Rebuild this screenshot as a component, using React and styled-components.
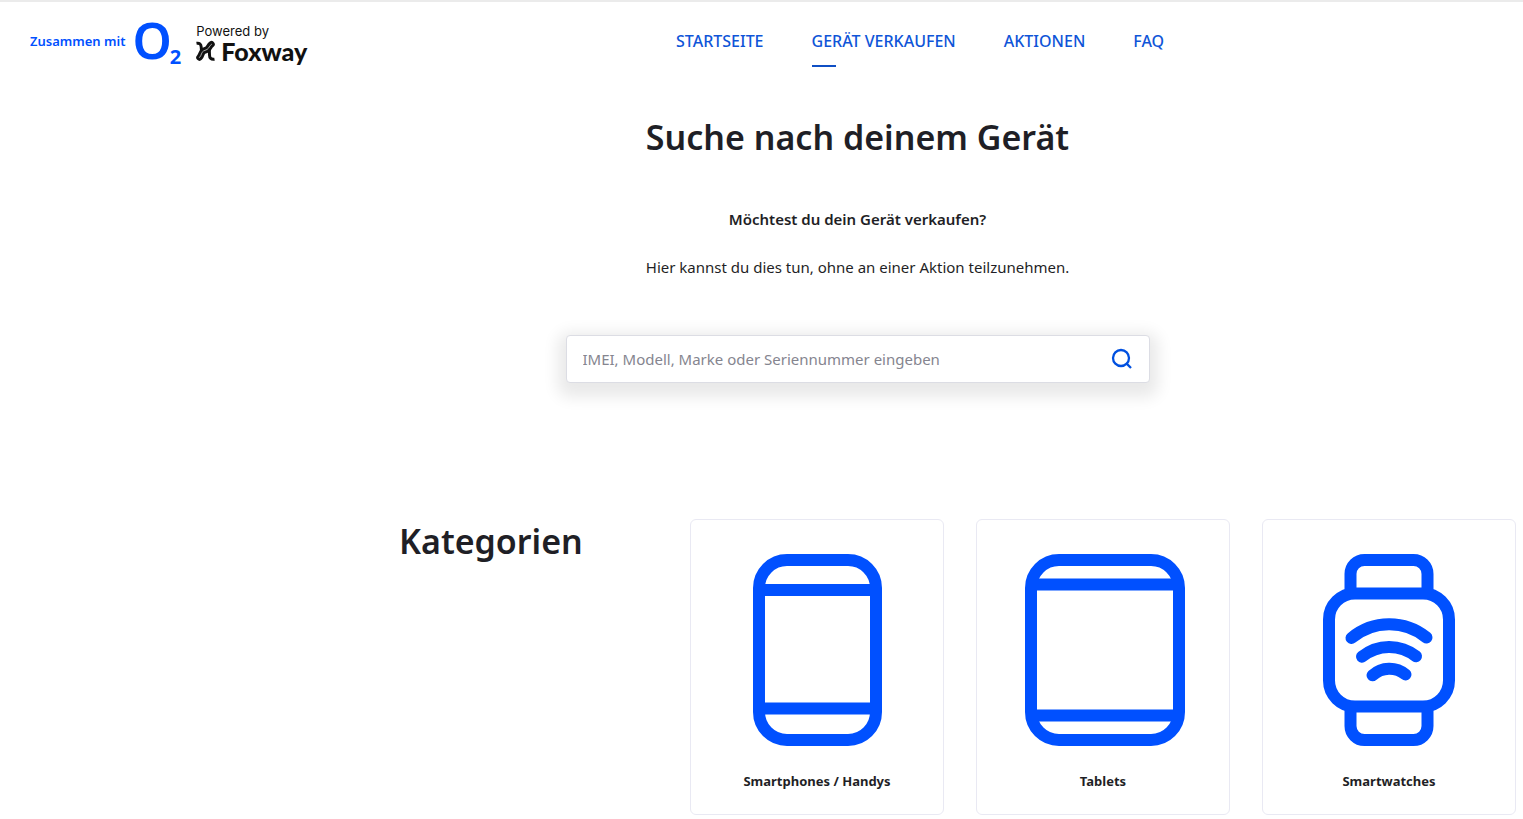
import React, { useState } from "react";
import styled, { createGlobalStyle } from "styled-components";
import { Search } from "lucide-react";

const navItems = [
  { label: "STARTSEITE", href: "#startseite" },
  { label: "GERÄT VERKAUFEN", href: "#verkaufen", active: true },
  { label: "AKTIONEN", href: "#aktionen" },
  { label: "FAQ", href: "#faq" },
];

const categories = [
  { name: "Smartphones / Handys", href: "#smartphones", Icon: PhoneIcon },
  { name: "Tablets", href: "#tablets", Icon: TabletIcon },
  { name: "Smartwatches", href: "#smartwatches", Icon: WatchIcon },
];

function PhoneIcon() {
  return (
    <Drawing viewBox="0 0 192 192" aria-hidden="true">
      <rect x="38" y="6" width="117" height="180" rx="28" />
      <path d="M38 36H155M38 154.5H155" />
    </Drawing>
  );
}

function TabletIcon() {
  return (
    <Drawing viewBox="0 0 192 192" aria-hidden="true">
      <rect x="24" y="6" width="148" height="180" rx="28" />
      <path d="M24 30.5H172M24 161.5H172" />
    </Drawing>
  );
}

function WatchIcon() {
  return (
    <Drawing viewBox="0 0 192 192" aria-hidden="true">
      <rect x="36" y="39.5" width="120" height="113" rx="26" />
      <path d="M57.5 39V20A14 14 0 0 1 71.5 6H120.5A14 14 0 0 1 134.5 20V39" />
      <path d="M57.5 153V172A14 14 0 0 0 71.5 186H120.5A14 14 0 0 0 134.5 172V153" />
      <g strokeLinecap="round">
        <path d="M58.5 84A59 59 0 0 1 133.5 83.5" />
        <path d="M69 102.7A43 43 0 0 1 123 102.3" />
        <path d="M79.5 121.3A25 25 0 0 1 112.5 120.5" />
      </g>
    </Drawing>
  );
}

function FoxwayMark() {
  return (
    <svg width="20" height="22" viewBox="0 0 20 22" fill="none" aria-hidden="true">
      <path
        d="M0.500 3.300C3.500 2.800 5 4 5.200 7L5.500 11M18.500 19.200C15 19.800 13.500 18 13.500 15L13.300 10"
        stroke="#111"
        strokeWidth="3"
      />
      <path
        d="M3.500 17.500C6 15 5 12.500 7.500 11L11 9.500C13.500 8 13 6 15.500 4.300"
        stroke="#111"
        strokeWidth="6.500"
        strokeLinecap="round"
      />
      <path
        d="M3.500 17.500C6 15 5 12.500 7.500 11L11 9.500C13.500 8 13 6 15.500 4.300"
        stroke="#aaa"
        strokeWidth="1"
        strokeLinecap="round"
      />
    </svg>
  );
}

export default function App() {
  const [query, setQuery] = useState("");

  return (
    <>
      <GlobalStyle />
      <Header>
        <Brand href="#startseite">
          <Together>Zusammen mit</Together>
          <Operator>
            <span>O</span>
            <small>2</small>
          </Operator>
          <Partner>
            <PoweredBy>Powered by</PoweredBy>
            <PartnerName>
              <FoxwayMark />
              Foxway
            </PartnerName>
          </Partner>
        </Brand>
        <Nav aria-label="Hauptnavigation">
          {navItems.map((item) => (
            <NavLink
              key={item.label}
              href={item.href}
              $active={item.active}
              aria-current={item.active ? "page" : undefined}
            >
              {item.label}
            </NavLink>
          ))}
        </Nav>
      </Header>

      <main>
        <Hero>
          <Title>Suche nach deinem Gerät</Title>
          <Intro>
            <strong>Möchtest du dein Gerät verkaufen?</strong>
            <p>Hier kannst du dies tun, ohne an einer Aktion teilzunehmen.</p>
          </Intro>
          <SearchForm role="search" onSubmit={(e) => e.preventDefault()}>
            <SearchInput
              type="text"
              aria-label="Gerät suchen"
              placeholder="IMEI, Modell, Marke oder Seriennummer eingeben"
              value={query}
              onChange={(e) => setQuery(e.target.value)}
            />
            <SearchButton type="submit" aria-label="Suchen">
              <Search size={24} strokeWidth={2.3} strokeLinecap="butt" />
            </SearchButton>
          </SearchForm>
        </Hero>

        <Categories>
          <Title as="h2">Kategorien</Title>
          <CardGrid>
            {categories.map(({ name, href, Icon }) => (
              <Card key={name} href={href}>
                <Icon />
                <CardName>{name}</CardName>
              </Card>
            ))}
          </CardGrid>
        </Categories>
      </main>
    </>
  );
}

const GlobalStyle = createGlobalStyle`
  * {
    box-sizing: border-box;
  }

  body {
    margin: 0;
    background: #fff;
    color: #1f1f26;
    font-family: "Noto Sans", "Open Sans", sans-serif;
    font-size: 15px;
    line-height: 24px;
  }
`;

const Header = styled.header`
  display: grid;
  grid-template-columns: 646px 1fr;
  align-items: center;
  min-height: 84px;
  padding: 0 30px;
  border-top: 2px solid #ebebeb;
`;

const Brand = styled.a`
  display: flex;
  align-items: center;
  justify-self: start;
  color: #0050ff;
  text-decoration: none;
`;

const Together = styled.span`
  margin-right: 7px;
  padding-bottom: 4px;
  font-size: 13px;
  font-weight: 600;
`;

const Operator = styled.span`
  display: flex;
  align-items: flex-end;
  margin-right: 15px;

  span {
    padding-bottom: 6px;
    font-size: 50px;
    font-weight: 600;
    line-height: 40px;
  }

  small {
    margin-left: -2px;
    font-size: 20px;
    font-weight: 700;
    line-height: 18px;
  }
`;

const Partner = styled.span`
  display: flex;
  flex-direction: column;
  color: #111;
`;

const PoweredBy = styled.span`
  font-family: Inter, sans-serif;
  font-size: 13px;
  line-height: 16px;
`;

const PartnerName = styled.span`
  display: flex;
  align-items: center;
  gap: 5px;
  font-family: Lato, sans-serif;
  font-size: 25px;
  font-weight: 900;
  line-height: 24px;
`;

const Nav = styled.nav`
  display: flex;
  gap: 48px;
  padding-bottom: 4px;
`;

const NavLink = styled.a`
  position: relative;
  color: #0f55d8;
  font-size: 16px;
  font-weight: 500;
  white-space: nowrap;
  text-decoration: none;

  &::after {
    content: "";
    display: ${({ $active }) => ($active ? "block" : "none")};
    position: absolute;
    left: 0;
    bottom: -14px;
    width: 24px;
    height: 2px;
    background: #0f4fc4;
  }
`;

const Hero = styled.section`
  display: flex;
  flex-direction: column;
  align-items: center;
  padding: 31px 0 0 192px;
  text-align: center;
`;

const Title = styled.h1`
  margin: 0;
  font-size: 34px;
  font-weight: 600;
  line-height: 44px;
`;

const Intro = styled.div`
  margin: 48px 0 56px;

  strong {
    font-weight: 600;
  }

  p {
    margin: 24px 0 0;
  }
`;

const SearchForm = styled.form`
  display: flex;
  align-items: center;
  width: 584px;
  max-width: 100%;
  height: 48px;
  padding: 0 15px 0 16px;
  border: 1px solid #dcdde4;
  border-radius: 4px;
  background: #fff;
  box-shadow: 0 6px 16px 8px rgba(0, 0, 0, 0.09);
`;

const SearchInput = styled.input`
  flex: 1;
  min-width: 0;
  padding: 0;
  border: 0;
  outline: 0;
  background: none;
  color: inherit;
  font: inherit;

  &::placeholder {
    color: #85858f;
    opacity: 1;
  }
`;

const SearchButton = styled.button`
  display: flex;
  padding: 0;
  border: 0;
  background: none;
  color: #0050e0;
  cursor: pointer;
`;

const Categories = styled.section`
  display: grid;
  grid-template-columns: 291px 1fr;
  align-items: start;
  padding: 136px 7px 0 399px;
`;

const CardGrid = styled.div`
  display: grid;
  grid-template-columns: repeat(3, 1fr);
  gap: 32px;
`;

const Card = styled.a`
  display: flex;
  flex-direction: column;
  align-items: center;
  gap: 23px;
  padding: 34px 16px 21px;
  border: 1px solid #e9e9f3;
  border-radius: 6px;
  color: inherit;
  text-decoration: none;
`;

const Drawing = styled.svg`
  width: 192px;
  height: 192px;
  fill: none;
  stroke: #0050ff;
  stroke-width: 12px;
`;

const CardName = styled.span`
  font-size: 13px;
  font-weight: 700;
`;
